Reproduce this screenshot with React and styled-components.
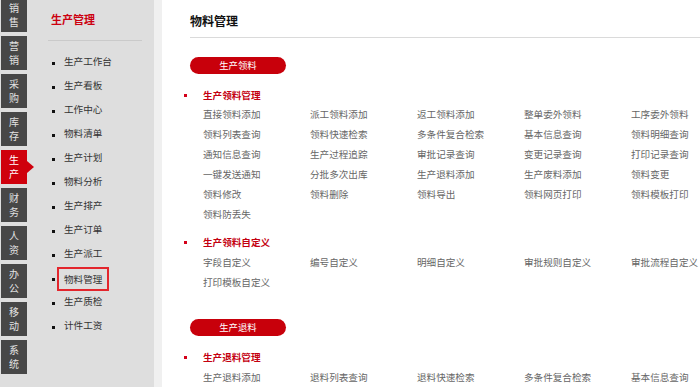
import React from "react";
import styled, { createGlobalStyle } from "styled-components";

const GlobalStyle = createGlobalStyle`
  html, body {
    margin: 0;
    padding: 0;
    background: #fff;
    overflow: hidden;
  }
  body {
    font-family: "Microsoft YaHei", "Noto Sans CJK SC", "Noto Sans", sans-serif;
  }
`;

const tabs = ["销售", "营销", "采购", "库存", "生产", "财务", "人资", "办公", "移动", "系统"];

const menu = [
  "生产工作台", "生产看板", "工作中心", "物料清单", "生产计划", "物料分析",
  "生产排产", "生产订单", "生产派工", "物料管理", "生产质检", "计件工资",
];

const groups = [
  {
    pill: "生产领料",
    sections: [
      {
        title: "生产领料管理",
        items: [
          "直接领料添加", "派工领料添加", "返工领料添加", "整单委外领料", "工序委外领料",
          "领料列表查询", "领料快速检索", "多条件复合检索", "基本信息查询", "领料明细查询",
          "通知信息查询", "生产过程追踪", "审批记录查询", "变更记录查询", "打印记录查询",
          "一键发送通知", "分批多次出库", "生产退料添加", "生产废料添加", "领料变更",
          "领料修改", "领料删除", "领料导出", "领料网页打印", "领料模板打印",
          "领料防丢失",
        ],
      },
      {
        title: "生产领料自定义",
        items: ["字段自定义", "编号自定义", "明细自定义", "审批规则自定义", "审批流程自定义", "打印模板自定义"],
      },
    ],
  },
  {
    pill: "生产退料",
    sections: [
      {
        title: "生产退料管理",
        items: ["生产退料添加", "退料列表查询", "退料快速检索", "多条件复合检索", "基本信息查询"],
      },
    ],
  },
];

const Page = styled.div`
  display: flex;
  height: 387px;
  width: 700px;
  overflow: hidden;
`;

const Sidebar = styled.div`
  display: flex;
  width: 154px;
  flex-shrink: 0;
  background: #dedede;
`;

const TabColumn = styled.div`
  width: 28px;
  padding-left: 1px;
  box-sizing: border-box;
  display: flex;
  flex-direction: column;
  gap: 4px;
  margin-top: -2px;
`;

const Tab = styled.div`
  position: relative;
  width: 26px;
  height: 34px;
  flex-shrink: 0;
  background: ${({ $active }) => ($active ? "#cf000c" : "#474747")};
  color: ${({ $active }) => ($active ? "#fff" : "#e2e2e2")};
  font-size: 10px;
  line-height: 14px;
  display: flex;
  flex-direction: column;
  align-items: center;
  justify-content: center;

  &::after {
    content: "";
    display: ${({ $active }) => ($active ? "block" : "none")};
    position: absolute;
    left: 26px;
    top: 11px;
    border-top: 6px solid transparent;
    border-bottom: 6px solid transparent;
    border-left: 7px solid #cf000c;
  }
`;

const SubMenu = styled.div`
  flex: 1;
  padding: 0 12px 0 20px;
`;

const SubTitle = styled.div`
  padding: 11px 0 0 3px;
  height: 16px;
  line-height: 16px;
  font-size: 11px;
  font-weight: bold;
  color: #cc0010;
`;

const Divider = styled.div`
  margin-top: 13px;
  height: 1px;
  background: #cacaca;
`;

const MenuList = styled.ul`
  list-style: none;
  margin: 10px 0 0;
  padding: 0;
`;

const MenuItem = styled.li`
  display: flex;
  align-items: center;
  height: 24px;
  font-size: 9.6px;
  color: #333;
`;

const Square = styled.span`
  width: 3px;
  height: 3px;
  margin: 0 9px 0 4px;
  background: #111;
`;

const MenuText = styled.span`
  box-sizing: border-box;
  height: 24px;
  line-height: 20px;
  ${({ $boxed }) =>
    $boxed &&
    `
    border: 2px solid #e3262d;
    padding: 0 5px;
    margin-left: -7px;
  `}
`;

const Gutter = styled.div`
  width: 8px;
  flex-shrink: 0;
  background: #f0f0f0;
`;

const Content = styled.div`
  flex: 1;
  padding-left: 28px;
`;

const Header = styled.div`
  height: 34px;
  padding-top: 3px;
  border-bottom: 1px solid #dadada;
  display: flex;
  align-items: center;
  font-size: 12px;
  font-weight: bold;
  color: #111;
`;

const Group = styled.div`
  margin-top: ${({ $first }) => ($first ? "19px" : "27px")};
`;

const Pill = styled.div`
  width: 96px;
  height: 17px;
  border-radius: 9px;
  background: #c8000b;
  color: #fff;
  font-size: 9.4px;
  line-height: 17px;
  text-align: center;
`;

const Section = styled.div`
  margin-top: ${({ $first }) => ($first ? "13px" : "10px")};
`;

const SectionTitle = styled.div`
  display: flex;
  align-items: center;
  height: 16px;
  margin-left: -6px;
  font-size: 9.6px;
  font-weight: bold;
  color: #c40010;
`;

const RedDot = styled.span`
  width: 3px;
  height: 3px;
  background: #d4001a;
  margin-right: 16px;
`;

const Grid = styled.div`
  display: grid;
  grid-template-columns: repeat(5, 107px);
  grid-auto-rows: 20px;
  margin-top: ${({ $tight }) => ($tight ? "1px" : "2px")};
  padding-left: 13px;
`;

const Link = styled.span`
  font-size: 9.6px;
  line-height: 20px;
  color: #666;
  white-space: nowrap;
`;

export default function App() {
  return (
    <>
      <GlobalStyle />
      <Page>
        <Sidebar>
          <TabColumn>
            {tabs.map((t) => (
              <Tab key={t} $active={t === "生产"}>
                <span>{t[0]}</span>
                <span>{t[1]}</span>
              </Tab>
            ))}
          </TabColumn>
          <SubMenu>
            <SubTitle>生产管理</SubTitle>
            <Divider />
            <MenuList>
              {menu.map((m) => (
                <MenuItem key={m}>
                  <Square />
                  <MenuText $boxed={m === "物料管理"}>{m}</MenuText>
                </MenuItem>
              ))}
            </MenuList>
          </SubMenu>
        </Sidebar>
        <Gutter />
        <Content>
          <Header>物料管理</Header>
          {groups.map((g, gi) => (
            <Group key={g.pill} $first={gi === 0}>
              <Pill>{g.pill}</Pill>
              {g.sections.map((s, si) => (
                <Section key={s.title} $first={si === 0}>
                  <SectionTitle>
                    <RedDot />
                    {s.title}
                  </SectionTitle>
                  <Grid $tight={gi === 0 && si === 0}>
                    {s.items.map((it, i) => (
                      <Link key={i}>{it}</Link>
                    ))}
                  </Grid>
                </Section>
              ))}
            </Group>
          ))}
        </Content>
      </Page>
    </>
  );
}
